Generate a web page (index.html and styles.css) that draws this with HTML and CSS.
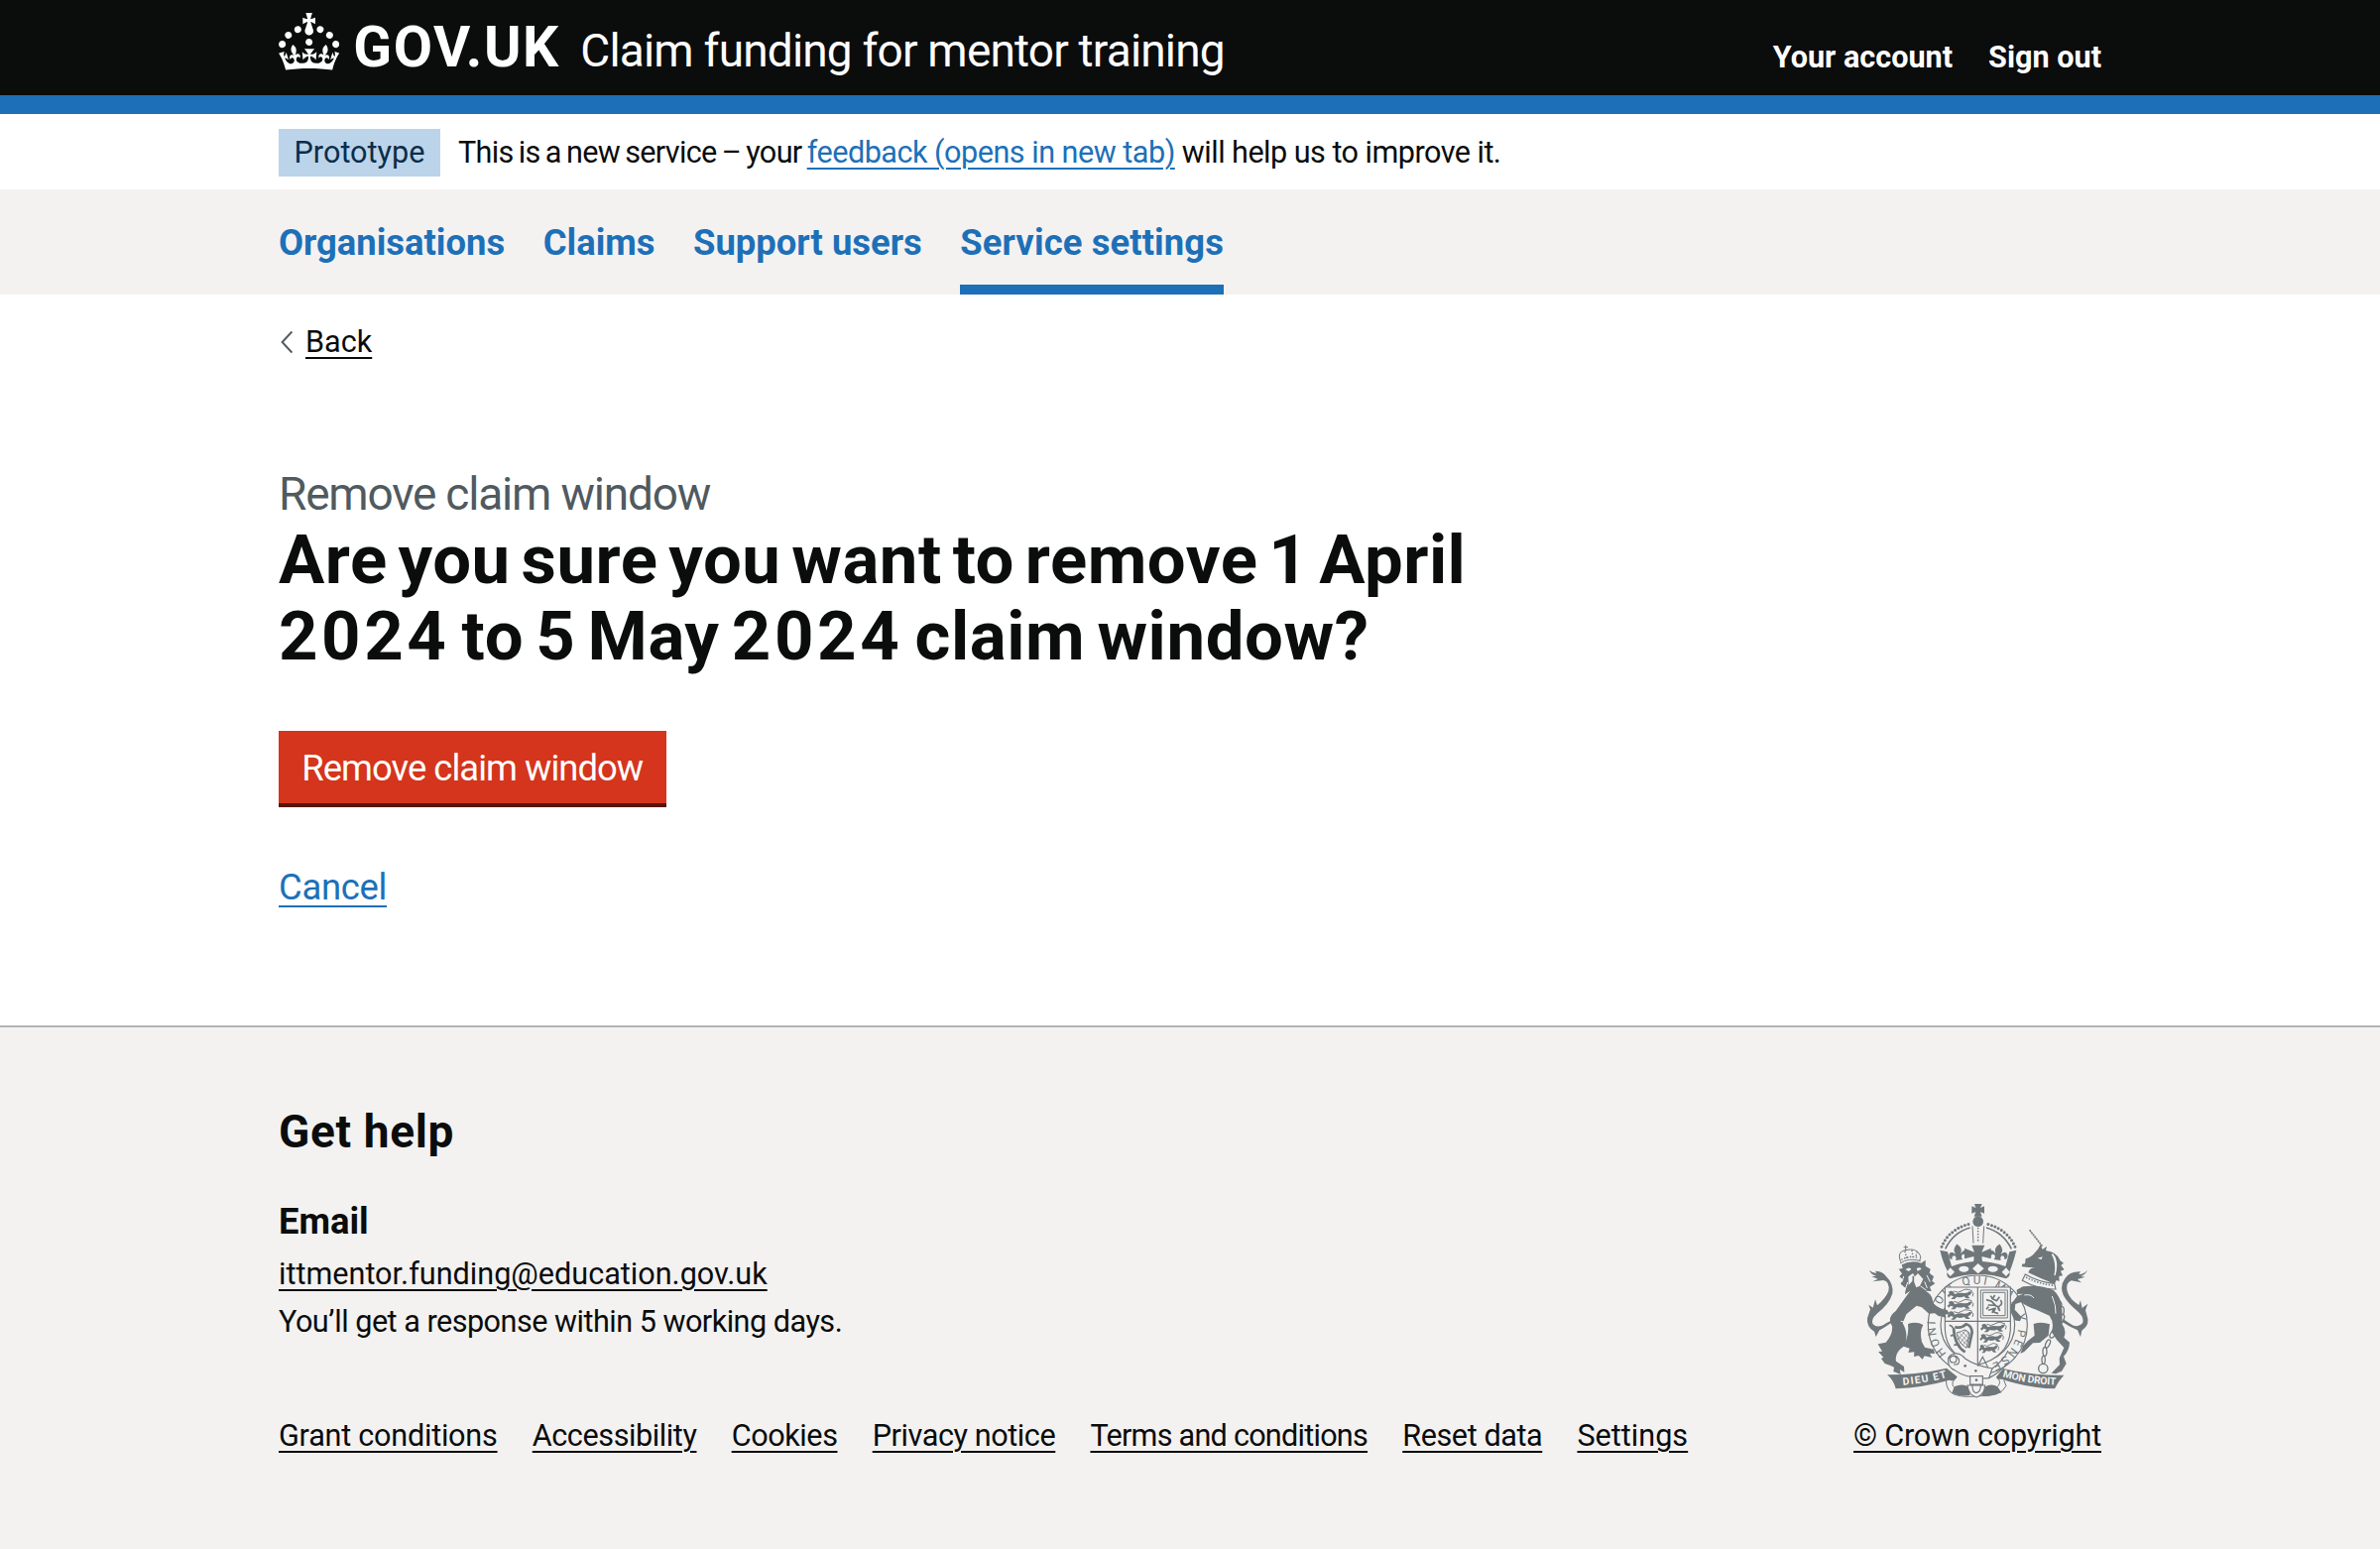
FILE: index.html
```html
<!DOCTYPE html>
<html lang="en">
<head>
<meta charset="utf-8">
<title>Remove claim window - Claim funding for mentor training</title>
<link rel="stylesheet" href="styles.css">
</head>
<body>
<header class="header">
  <div class="container header-row">
    <svg class="crown" viewBox="0 0 32 30" aria-hidden="true"><path d="M22.6 10.4c-1 .4-2-.1-2.4-1-.4-.9.1-2 1-2.4.9-.4 2 .1 2.4 1s-.1 2-1 2.4m-5.9 6.7c-.9.4-2-.1-2.4-1-.4-.9.1-2 1-2.4.9-.4 2 .1 2.4 1s-.1 2-1 2.4m10.8-3.7c-1 .4-2-.1-2.4-1-.4-.9.1-2 1-2.4.9-.4 2 .1 2.4 1s0 2-1 2.4m3.3 4.8c-1 .4-2-.1-2.4-1-.4-.9.1-2 1-2.4.9-.4 2 .1 2.4 1s-.1 2-1 2.4M17 4.7l2.3 1.2V2.5l-2.3.7-.2-.2.9-3h-3.4l.9 3-.2.2c-.1.1-2.3-.7-2.3-.7v3.4L15 4.7c.1.1.1.2.2.2l-1.3 4c-.1.2-.1.4-.1.6 0 1.1.8 2 1.9 2.2h.7c1-.2 1.9-1.1 1.9-2.1 0-.2 0-.4-.1-.6l-1.3-4c-.1-.2 0-.2.1-.3m-7.6 5.7c.9.4 2-.1 2.4-1 .4-.9-.1-2-1-2.4-.9-.4-2 .1-2.4 1s0 2 1 2.4m-5 3c.9.4 2-.1 2.4-1 .4-.9-.1-2-1-2.4-.9-.4-2 .1-2.4 1s.1 2 1 2.4m-3.2 4.8c.9.4 2-.1 2.4-1 .4-.9-.1-2-1-2.4-.9-.4-2 .1-2.4 1s0 2 1 2.4m14.8 11c4.4 0 8.6.3 12.3.8 1.1-4.5 2.4-7 3.7-8.8l-2.5-.9c.2 1.3.3 1.9 0 2.7-.4-.4-.8-1.1-1.1-2.3l-1.2 4c.7-.5 1.3-.8 2-.9-1.1 2.5-2.6 3.1-3.5 3-1.1-.2-1.7-1.2-1.5-2.1.3-1.2 1.5-1.5 2.1-.1 1.1-2.3-.8-3-2-2.3 1.9-1.9 2.1-3.5.6-5.6-2.1 1.6-2.1 3.2-1.2 5.5-1.2-1.4-3.2-.6-2.5 1.6.9-1.4 2.1-.5 1.9.8-.2 1.1-1.7 2.1-3.5 1.9-2.7-.2-2.9-2.1-2.9-3.6.7-.1 1.9.5 2.9 1.9l.4-4.3c-1.1 1.1-2.1 1.4-3.2 1.4.4-1.2 2.1-3 2.1-3h-5.4s1.7 1.9 2.1 3c-1.1 0-2.1-.2-3.2-1.4l.4 4.3c1-1.4 2.2-2 2.9-1.9-.1 1.5-.2 3.4-2.9 3.6-1.9.2-3.4-.8-3.5-1.9-.2-1.3 1-2.2 1.9-.8.7-2.3-1.2-3-2.5-1.6.9-2.2.9-3.9-1.2-5.5-1.5 2-1.3 3.7.6 5.6-1.2-.7-3.1 0-2 2.3.6-1.4 1.8-1.1 2.1.1.2.9-.3 1.9-1.5 2.1-.9.2-2.4-.5-3.5-3 .6 0 1.2.3 2 .9l-1.2-4c-.3 1.1-.7 1.9-1.1 2.3-.3-.8-.2-1.4 0-2.7l-2.9.9C1.3 23 2.6 25.5 3.7 30c3.7-.5 7.9-.8 12.3-.8"/></svg>
    <span class="logotype">GOV.UK</span>
    <a class="service-name">Claim funding for mentor training</a>
    <nav class="account">
      <a>Your account</a>
      <a>Sign out</a>
    </nav>
  </div>
</header>

<div class="container phase">
  <strong class="tag">Prototype</strong>
  <span class="phase-text"><span class="phase-intro">This is a new service – your </span><a class="link phase-link">feedback (opens in new tab)</a> will help us to improve it.</span>
</div>

<nav class="primary">
  <div class="container primary-list">
    <a class="primary-item">Organisations</a>
    <a class="primary-item">Claims</a>
    <a class="primary-item">Support users</a>
    <a class="primary-item current">Service settings</a>
  </div>
</nav>

<main class="container main">
  <div class="back">
    <svg class="chevron" viewBox="0 0 14 24" aria-hidden="true"><path d="M13.4 1.5 3.6 12l9.8 10.5"/></svg>
    <a class="link dark">Back</a>
  </div>
  <div class="caption">Remove claim window</div>
  <h1 class="heading"><span class="line1">Are you sure you want to remove 1 April</span><br><span class="line2"><span class="year">2024</span> to 5 May <span class="year">2024</span> claim window?</span></h1>
  <button class="button">Remove claim window</button>
  <div class="cancel"><a class="link">Cancel</a></div>
</main>

<footer class="footer">
  <div class="container footer-row">
    <div class="footer-main">
      <h2 class="help">Get help</h2>
      <h3 class="email-title">Email</h3>
      <div class="text email"><a class="link dark">ittmentor.funding@education.gov.uk</a></div>
      <div class="text response">You’ll get a response within 5 working days.</div>
      <div class="footer-links">
        <a class="link dark ls-a">Grant conditions</a>
        <a class="link dark ls-b">Accessibility</a>
        <a class="link dark ls-b">Cookies</a>
        <a class="link dark ls-b">Privacy notice</a>
        <a class="link dark ls-c">Terms and conditions</a>
        <a class="link dark ls-b">Reset data</a>
        <a class="link dark">Settings</a>
      </div>
    </div>
    <div class="copyright">
      <svg class="arms" viewBox="96 68 678 592" aria-hidden="true">
        <defs>
          <path id="motto" d="M342 524A125 125 0 1 1 468 558"/>
          <path id="left-scroll" d="M210 619Q285 613 349 594"/>
          <path id="right-scroll" d="M511 594Q590 617 680 619"/>
          <g id="passant">
            <path d="M4 4q9-6 15 0l3 7q15-6 29-3 11 1 15-5l8 1q-2 11-12 12l7 8h-12l-6-6q-13 5-22 1l-7 7H11l8-8-9-3-6 6-4-6 6-5z"/>
            <path class="thin" d="M20 2q12 8 24-1t31 0M72 2q11 6 4 16"/>
          </g>
          <g id="side-fleur">
            <path d="M0-30q17 15 8 30 15-15 21 0 2 12-9 14 2-12-9-10-5 6 0 15h-22q6-9 0-15-11-2-9 10-11-2-9-14 6-15 21 0-9-15 8-30z"/>
          </g>
        </defs>

        <!-- Imperial crown -->
        <path d="M426 71h23l-5 12 12-5v22l-12-5 5 14h-24l5-14-12 5V78l12 5z"/>
        <circle cx="437" cy="124" r="16"/>
        <path class="beads" d="M327 201Q347 150 409 132M549 201Q528 150 466 132"/>
        <path class="mid" d="M338 207Q362 157 413 143M538 207Q513 157 462 143"/>
        <path class="thin" d="M420 138 423 190M455 138 452 190"/>
        <path class="small-beads" d="M437 145V190"/>
        <path d="M322 211 345 216 357 260Q437 230 520 260L532 216 553 211Q543 252 532 277 536 290 522 297 438 271 353 297 338 289 345 276 330 248 322 211z"/>
        <path d="M418 196h39l-9 21 28-12v32l-27-7q-2 17 10 28h-44q12-11 9-28l-28 7v-32l30 12z"/>
        <use href="#side-fleur" transform="translate(377 222) rotate(-8)"/>
        <use href="#side-fleur" transform="translate(498 222) rotate(8)"/>
        <path class="paper" d="M353 264 366 277 353 290 342 277zM437 251 455 267 437 282 420 267zM522 264 533 277 522 290 509 277z"/>
        <ellipse class="paper" cx="394" cy="268" rx="15" ry="9"/><ellipse class="paper" cx="482" cy="268" rx="15" ry="9"/>

        <!-- Garter -->
        <circle class="paper ring" cx="436" cy="437" r="150"/>
        <circle class="ring" cx="436" cy="437" r="112"/>
        <text class="garter-text"><textPath href="#motto" textLength="636">HONI SOIT QUI MAL Y PENSE</textPath></text>

        <!-- Shield -->
        <path class="paper ring" d="M337 323H535V452Q530 535 436 558 342 535 337 452z"/>
        <path class="ring" d="M436 323V555M337 426H535"/>
        <use href="#passant" transform="translate(344 333)"/>
        <use href="#passant" transform="translate(344 364)"/>
        <use href="#passant" transform="translate(344 395)"/>
        <use href="#passant" transform="translate(444 433)"/>
        <use href="#passant" transform="translate(442 464) scale(.92 1)"/>
        <use href="#passant" transform="translate(440 496) scale(.76 1)"/>
        <path class="thin" d="M445 332h81v84h-81zM452 339h67v70h-67z"/>
        <path class="rampant" d="M475 349l7 11M488 347l-7 11 12 6 9-12M462 361l16 5 12 12-23-1M484 372l9 10M469 382l-7 8M505 362q8 10-2 17t1 16M494 379l8 10M468 393l16-5-4 13M490 385l-5 13 13 5"/>
        <path class="heavy" d="M363 447Q366 500 398 519M367 443Q385 450 401 435 417 439 419 459L409 507"/>
        <path class="thin" d="M373 460Q374 489 402 507L411 462Q397 446 387 457z"/>
        <path class="hair" d="M379 460l30 31M374 467l32 34M390 458l21 23M398 451l15 18M401 452l-25 30M410 459l-28 34M412 473l-22 26"/>
        <path class="mid" d="M350 438q12 3 15 17M354 471q8-7 12 3M364 499q8-5 15 1"/>

        <!-- Garter strap and buckle -->
        <path class="paper ring" d="M347 548Q343 528 367 524 386 523 399 540 430 561 480 569L470 598Q404 602 366 574 347 566 347 548z"/>
        <path class="ring" d="M349 538Q368 521 379 541 384 559 363 557M480 569Q514 545 528 515M470 598Q503 581 526 552M436 562l15-28 16 32"/>
        <circle class="ring" cx="362" cy="541" r="10"/>
        <circle cx="398" cy="561" r="4"/><circle cx="430" cy="576" r="4"/>

        <!-- Motto scrolls -->
        <path d="M162 588Q260 587 342 568L373 593Q368 611 350 604 269 627 188 630 181 603 162 588z"/>
        <path d="M697 589Q610 592 513 569L493 594Q492 604 508 601 592 629 669 630 681 605 697 589z"/>
        <path d="M365 624Q390 612 409 625L413 650Q385 655 358 643zM456 625Q478 612 496 624L508 642Q479 654 449 650z"/>
        <path class="thin" d="M340 605Q341 638 366 648 397 658 437 652 505 656 522 622L515 604M373 594Q353 612 363 625M493 594Q511 610 496 624"/>
        <text class="scroll-text"><textPath href="#left-scroll" textLength="135">DIEU ET</textPath></text>
        <text class="scroll-text"><textPath href="#right-scroll" textLength="164">MON DROIT</textPath></text>
        <path class="paper ring" d="M413 592H451V617H413zM405 620H458Q457 649 432 656 408 649 405 620z"/>
        <path class="ring" d="M420 620Q419 641 432 643 445 640 445 620"/><circle cx="432" cy="604" r="4"/>

        <!-- Lion supporter -->
        <path d="M197 268 209 266 206 255Q236 239 265 250L278 241 278 259 293 268 290 280 303 291 298 304 307 312 291 322 296 335 278 334Q302 347 300 370 319 389 344 392L351 407 336 404 341 417 326 411 318 411 306 402 288 403 267 384 251 379 220 405 209 432Q227 462 216 499 183 520 189 547L213 563 214 580 200 572 203 587 181 578 183 565 170 559 155 554 144 539 151 535 135 518 147 517 134 495 158 490Q180 465 177 441 160 415 188 395 216 355 232 334L216 345 218 326 203 313 209 299 199 291 207 282z"/>
        <path d="M225 434Q251 425 271 437 259 458 267 489L276 505 303 511 306 524 291 523 298 536 275 531 269 541 257 530 243 533 244 519 226 521 230 508 212 502Q229 467 225 434z"/>
        <path class="paper" d="M217 269q14-9 18 0l-8 6zM251 266q12-6 15 2l-12 6zM226 291l14-10 6 10 9-10 16 17-10 21-11 5-9-23-14 16z"/>
        <path class="mid" d="M241 289v20M228 281l-9 18M267 277l12 24"/>
        <path class="paper-line" d="M224 308l-8 24M212 290l-5 17M282 287l10 20M275 306l8 20M263 320l17 12M216 428l-13-2"/>
        <path class="thin" d="M201 251Q228 232 263 244M203 247Q190 215 217 211 251 203 261 225 266 231 260 243M218 196v18M212 202h13"/>
        <path class="small-beads" d="M207 239Q230 226 257 235M216 216l5 18M237 213l3 18M252 218l-4 15"/>
        <path d="M108 272Q119 281 130 281L126 274Q147 274 158 289 182 312 178 342 169 374 131 403 111 421 119 435 134 450 159 432L180 421 178 428Q153 446 139 453L128 473 123 457Q99 444 102 417L111 390 106 376 119 385 126 360 132 378Q157 357 166 335 171 306 151 302L118 306 134 298 115 291 129 289Q112 284 108 272z"/>

        <!-- Unicorn supporter -->
        <path class="horn" d="M593 150 632 200"/>
        <path d="M618 208 626 194 632 209 645 199 642 212Q676 216 686 243L696 250 688 257 698 270 687 274 693 288 682 290 683 305 674 302 668 315Q650 304 632 298L589 279Q593 263 613 263L589 263 570 261 570 253 579 252 581 237Q600 231 610 217z"/>
        <path class="paper" d="M617 235l15-4-3 8zM664 222q19 22 7 65l-4 1q8-38-8-65z"/>
        <path class="paper ring" d="M580 284Q623 309 668 312L672 329Q621 331 571 303z"/>
        <path class="small-beads" d="M584 294Q621 313 664 318"/>
        <path d="M573 321Q623 314 665 332 688 350 691 391L692 436Q706 453 697 475L714 490Q713 515 696 532L704 554 690 577 672 585 659 583 684 557 683 538 697 506 675 482 659 458Q669 432 653 409L613 391Q582 381 568 368L550 374 548 391 569 414 564 426 547 423 537 400 537 375 555 350 574 343 555 344 554 331z"/>
        <path d="M605 434Q630 426 654 435L650 469 624 491 603 492 577 518 565 524 573 501 588 485 608 469z"/>
        <path class="paper-line" d="M577 347Q598 343 606 356M661 350Q674 379 672 403"/>
        <path d="M768 272Q755 285 742 284L747 276Q713 275 700 297 683 320 695 347 707 370 737 395 760 414 753 432 738 450 711 430L694 419 693 429Q717 445 738 453L747 474 751 454Q776 438 767 411L762 393 769 373 752 386 747 363 742 377Q714 359 708 338 700 311 719 303L750 309 738 299 761 292 747 290Q761 286 768 272z"/>
        <g class="chain">
          <ellipse cx="681" cy="373" rx="8" ry="11" transform="rotate(-25 681 373)"/>
          <ellipse cx="691" cy="394" rx="6" ry="12"/>
          <ellipse cx="690" cy="418" rx="7" ry="13" transform="rotate(20 690 418)"/>
          <ellipse cx="679" cy="440" rx="6" ry="13" transform="rotate(28 679 440)"/>
          <ellipse cx="664" cy="464" rx="7" ry="14" transform="rotate(32 664 464)"/>
          <ellipse cx="648" cy="494" rx="6" ry="13" transform="rotate(24 648 494)"/>
          <ellipse cx="639" cy="518" rx="6" ry="13"/>
          <ellipse cx="635" cy="543" rx="5" ry="12"/>
          <circle cx="634" cy="569" r="14"/>
        </g>
      </svg>
      <a class="link dark crown-copy">© Crown copyright</a>
    </div>
  </div>
</footer>
</body>
</html>
```
FILE: styles.css
```css
* { box-sizing: border-box; }

body {
  margin: 0;
  min-height: 1562px;
  display: flex;
  flex-direction: column;
  background: #fff;
  color: #0b0c0c;
  font-family: Roboto, "Liberation Sans", sans-serif;
  font-size: 30.6px;
}

h1, h2, h3 { margin: 0; font-weight: 700; }

.container { width: 1838px; margin: 0 auto; }

.link {
  color: #1d70b8;
  text-decoration: underline;
  text-decoration-thickness: 2px;
  text-underline-offset: 5px;
}
.link.dark { color: #0b0c0c; }

/* Header */
.header {
  height: 115px;
  background: #0b0c0c;
  border-bottom: 19px solid #1d70b8;
  color: #fff;
}
.header-row { display: flex; align-items: flex-start; }
.crown { width: 61.3px; height: 57.5px; margin-top: 13px; fill: #fff; }
.logotype {
  width: 215px;
  margin-left: 14px;
  padding-top: 18.5px;
  font-size: 57px;
  line-height: 58px;
  font-weight: 700;
  letter-spacing: 1.6px;
}
.service-name {
  margin-left: 14px;
  padding-top: 22.4px;
  font-size: 46px;
  line-height: 58px;
  letter-spacing: -0.82px;
  white-space: nowrap;
}
.account {
  margin-left: auto;
  padding-top: 38.6px;
  display: flex;
  gap: 36px;
  font-weight: 700;
  line-height: 38px;
}

/* Phase banner */
.phase {
  display: flex;
  gap: 18px;
  padding: 15px 0 13px;
  line-height: 48px;
}
.tag {
  width: 163px;
  height: 48px;
  text-align: center;
  font-weight: 400;
  background: #bbd4ea;
  color: #0c2d4a;
}
.phase-text { letter-spacing: -0.53px; white-space: nowrap; }
.phase-intro { letter-spacing: -0.69px; word-spacing: -1.7px; }
.phase-link { letter-spacing: -0.5px; }

/* Primary navigation */
.primary { background: #f3f2f1; }
.primary-list { display: flex; gap: 38.6px; }
.primary-item {
  height: 106px;
  padding-top: 11px;
  line-height: 85px;
  font-size: 36.4px;
  font-weight: 700;
  color: #1d70b8;
  border-bottom: 10px solid transparent;
}
.primary-item.current { letter-spacing: 0.12px; border-color: #1d70b8; }

/* Main content */
.main { padding-top: 29.4px; }
.back { display: flex; align-items: center; line-height: 38px; }
.chevron {
  width: 14px;
  height: 24px;
  margin-right: 13px;
  fill: none;
  stroke: #505a5f;
  stroke-width: 2;
}
.caption {
  margin-top: 104.7px;
  font-size: 46px;
  line-height: 58px;
  letter-spacing: -1.2px;
  color: #505a5f;
}
.heading { font-size: 68.9px; line-height: 76.6px; white-space: nowrap; }
.line1 { letter-spacing: 0.5px; word-spacing: -6.7px; }
.line2 { letter-spacing: 0.6px; word-spacing: -5.6px; }
.year { letter-spacing: 3.6px; }
.button {
  display: block;
  width: 390.5px;
  height: 72.5px;
  margin: 56.8px 0 0;
  padding: 20px 0 16.5px;
  border: 0;
  font: 400 36.4px/36px Roboto, "Liberation Sans", sans-serif;
  letter-spacing: -0.96px;
  color: #fff;
  background: #d4351c;
  box-shadow: 0 4px 0 #55150b;
}
.cancel {
  margin-top: 61.6px;
  font-size: 36.4px;
  line-height: 48px;
  letter-spacing: -0.3px;
}
.cancel .link { text-underline-offset: 6px; }

/* Footer */
.footer {
  flex: 1;
  margin-top: 114.8px;
  border-top: 2px solid #b1b4b6;
  background: #f3f2f1;
}
.footer-row {
  display: flex;
  justify-content: space-between;
  align-items: flex-end;
  padding-top: 75.8px;
}
.help { font-size: 46px; line-height: 58px; letter-spacing: 0.64px; }
.email-title { margin-top: 38.3px; font-size: 36.4px; line-height: 48px; }
.text { line-height: 48px; }
.email { margin-top: 5px; }
.response { letter-spacing: -0.51px; }
.footer-links {
  display: flex;
  gap: 35.2px;
  margin-top: 67px;
  line-height: 48px;
  white-space: nowrap;
}
.ls-a { letter-spacing: -0.24px; }
.ls-b { letter-spacing: -0.42px; }
.ls-c { letter-spacing: -0.75px; }
.copyright { display: flex; flex-direction: column; align-items: center; }
.crown-copy { line-height: 48px; letter-spacing: -0.2px; white-space: nowrap; }

/* Royal coat of arms */
.arms { width: 226px; height: 197.3px; margin-bottom: 13.3px; fill: #6f777b; }
.arms .paper { fill: #f3f2f1; }
.arms .ring, .arms .thin, .arms .mid, .arms .heavy, .arms .rampant,
.arms .hair, .arms .beads, .arms .small-beads, .arms .horn, .arms .chain {
  stroke: #6f777b;
}
.arms .ring, .arms .thin, .arms .mid, .arms .heavy, .arms .rampant,
.arms .hair, .arms .beads, .arms .small-beads, .arms .horn, .arms .chain,
.arms .paper-line { fill: none; }
.arms .paper.ring { fill: #f3f2f1; }
.arms .ring { stroke-width: 3.5; }
.arms .thin { stroke-width: 3; }
.arms .mid { stroke-width: 5; }
.arms .heavy { stroke-width: 8; }
.arms .rampant { stroke-width: 5; }
.arms .hair { stroke-width: 2; }
.arms .beads { stroke-width: 9; stroke-linecap: round; stroke-dasharray: 0 11; }
.arms .small-beads { stroke-width: 5; stroke-linecap: round; stroke-dasharray: 0 9; }
.arms .horn { stroke-width: 5; stroke-dasharray: 6 2; }
.arms .chain { stroke-width: 4; }
.arms .paper-line { stroke: #f3f2f1; stroke-width: 3; }
.arms .garter-text { font-size: 35px; font-weight: 400; }
.arms .scroll-text { font-size: 31px; font-weight: 700; fill: #f3f2f1; }
```
